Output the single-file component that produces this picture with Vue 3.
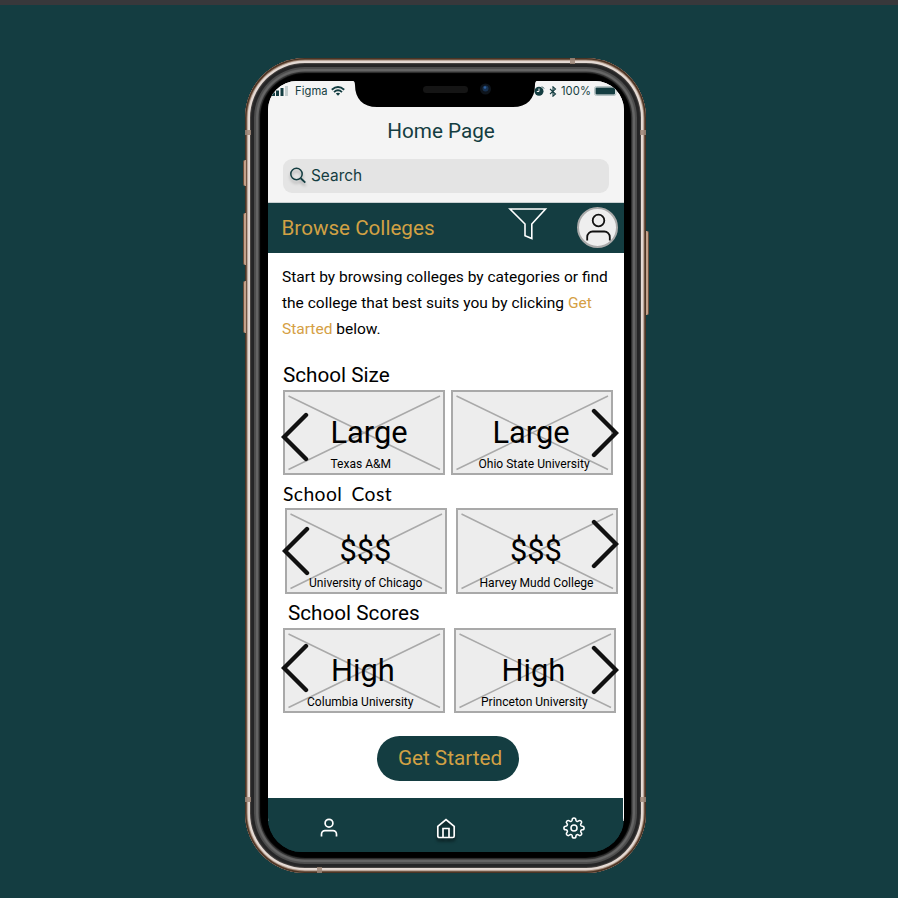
<script setup>
const groups = [
  {
    name: 'School Size', kind: 'size',
    cards: [
      { title: 'Large', school: 'Texas A&M', titleX: 45.5, schoolX: 45.5 },
      { title: 'Large', school: 'Ohio State University', titleX: 39.5, schoolX: 25.5 },
    ],
  },
  {
    name: 'School Cost', kind: 'cost',
    cards: [
      { title: '$$$', school: 'University of Chicago', titleX: 52.5, schoolX: 22 },
      { title: '$$$', school: 'Harvey Mudd College', titleX: 52, schoolX: 21.5 },
    ],
  },
  {
    name: 'School Scores', kind: 'scores',
    cards: [
      { title: 'High', school: 'Columbia University', titleX: 46, schoolX: 22 },
      { title: 'High', school: 'Princeton University', titleX: 45.5, schoolX: 25 },
    ],
  },
]
</script>

<template>
  <main class="stage">
    <div class="phone">
      <i class="button mute"></i>
      <i class="button up"></i>
      <i class="button down"></i>
      <i class="button power"></i>
      <i class="band-mark m1"></i><i class="band-mark m2"></i><i class="band-mark m3"></i>
      <i class="band-mark m4"></i><i class="band-mark m5"></i><i class="band-mark m6"></i>

      <div class="screen">
        <header class="top">
          <div class="status">
            <svg class="signal" width="16" height="10" viewBox="0 0 16 10">
              <path d="M0 6.500h3V10H0zM4 4.500h3V10H4zM8.500 2h3v8h-3z" fill="#143d41" />
              <path d="M13 0h3v10h-3z" fill="#c3cdce" />
            </svg>
            <span class="carrier">Figma</span>
            <svg class="wifi" width="14" height="10" viewBox="0 0 14 10" fill="none" stroke="#143d41" stroke-width="1.900">
              <path d="M.8 3.700Q7-1.700 13.200 3.700M3 6.100Q7 2.600 11 6.100" />
              <path d="M4.800 7.600Q7 5.900 9.200 7.600L7 9.800z" fill="#143d41" stroke="none" />
            </svg>
            <span class="spacer"></span>
            <svg class="alarm" width="11" height="10" viewBox="0 0 11 10">
              <circle cx="5" cy="5.200" r="4.500" fill="#143d41" />
              <path d="M5 2.500v3H2.800" fill="none" stroke="#f4f4f4" />
              <path d="M8 .5l2 2" stroke="#143d41" />
            </svg>
            <svg class="bluetooth" width="8" height="11" viewBox="0 0 8 11" fill="none" stroke="#143d41" stroke-width="1.100">
              <path d="M1 3l5.500 5L4 10.200V.8L6.500 3 1 8" />
            </svg>
            <span class="percent">100%</span>
            <svg class="battery" width="24" height="10" viewBox="0 0 24 10">
              <rect x=".5" y=".5" width="21.500" height="9" rx="2" fill="none" stroke="#b5c3c4" />
              <rect x="1.500" y="1.500" width="19.500" height="7" rx="1" fill="#143d41" />
            </svg>
          </div>
          <h1 class="title">Home Page</h1>
          <div class="search">
            <svg class="lens" width="17" height="17" viewBox="0 0 17 17" fill="none" stroke="#143d41" stroke-width="1.500">
              <circle cx="6.500" cy="7" r="5.700" />
              <path d="M10.700 11.200l4.600 4.400" stroke-width="1.900" />
            </svg>
            <span>Search</span>
          </div>
        </header>

        <section class="browse">
          <h2>Browse Colleges</h2>
          <svg class="funnel" width="40" height="34" viewBox="0 0 40 34" fill="none" stroke="#fff" stroke-width="1.600">
            <path d="M2 2h35.500L23.800 17v14.600l-6.800-2.800V17z" />
          </svg>
          <div class="avatar">
            <svg width="38" height="38" viewBox="0 0 38 38" fill="none" stroke="#111" stroke-width="1.800">
              <circle cx="19.500" cy="12.500" r="5.800" />
              <path d="M8.200 32.500v-3.500a5.500 5.500 0 0 1 5.500-5.500h11.600a5.500 5.500 0 0 1 5.500 5.500v3.500" />
            </svg>
          </div>
        </section>

        <p class="intro">
          Start by browsing colleges by categories or find<br />
          the college that best suits you by clicking <em>Get</em><br />
          <em>Started</em> below.
        </p>

        <section v-for="g in groups" :key="g.name" class="group" :class="g.kind">
          <h3>{{ g.name }}</h3>
          <div class="cards">
            <article v-for="c in g.cards" :key="c.school" class="card">
              <svg class="cross" viewBox="0 0 158 81" preserveAspectRatio="none" stroke="#a9a9a9" stroke-width="1.500">
                <path d="M3.500 4L155 77.500M155 4L3.500 77.500" />
              </svg>
              <strong :style="{ marginLeft: c.titleX + 'px' }">{{ c.title }}</strong>
              <small :style="{ marginLeft: c.schoolX + 'px' }">{{ c.school }}</small>
            </article>
            <svg class="arrow prev" width="28" height="50" viewBox="0 0 28 50">
              <path d="M25 3L3 25l22 22" />
            </svg>
            <svg class="arrow next" width="28" height="50" viewBox="0 0 28 50">
              <path d="M3 3l22 22L3 47" />
            </svg>
          </div>
        </section>

        <button class="start">Get Started</button>

        <nav class="tabs">
          <svg class="tab-user" width="18" height="20" viewBox="0 0 18 20">
            <circle cx="9" cy="5.200" r="3.900" />
            <path d="M1.500 18.500v-2.300a3.500 3.500 0 0 1 3.500-3.500h8a3.500 3.500 0 0 1 3.500 3.500v2.300" />
          </svg>
          <svg class="tab-home" width="20" height="21" viewBox="0 0 20 21">
            <path d="M1.800 8.300L10 1.500l8.200 6.800v9.700a1.500 1.500 0 0 1-1.500 1.500H3.300A1.500 1.500 0 0 1 1.800 18zM7 19.500v-9h6v9" />
          </svg>
          <svg class="tab-gear" width="22" height="22" viewBox="0 0 24 24">
            <circle cx="12" cy="12" r="3.300" />
            <path d="M19.400 15a1.650 1.650 0 0 0 .33 1.820l.06.06a2 2 0 1 1-2.830 2.830l-.06-.06a1.650 1.650 0 0 0-2.800 1.170V21a2 2 0 0 1-4 0v-.09A1.650 1.650 0 0 0 7.200 19.650l-.06.06a2 2 0 1 1-2.830-2.830l.06-.06A1.650 1.650 0 0 0 3.090 14H3a2 2 0 0 1 0-4h.09A1.650 1.650 0 0 0 4.350 7.200l-.06-.06a2 2 0 1 1 2.830-2.830l.06.06A1.650 1.650 0 0 0 10 3.090V3a2 2 0 0 1 4 0v.09a1.650 1.650 0 0 0 2.800 1.280l.06-.06a2 2 0 1 1 2.830 2.830l-.06.06A1.650 1.650 0 0 0 20.910 10H21a2 2 0 0 1 0 4h-.09a1.650 1.650 0 0 0-1.510 1z" />
          </svg>
        </nav>
      </div>

      <svg class="notch" width="190" height="28" viewBox="0 0 190 28">
        <path d="M0 0h190c-4 0-5 2-5 5 0 14-8 22-22 22H27C13 27 5 19 5 5c0-3-1-5-5-5z" />
        <rect x="73" y="6" width="45" height="7" rx="3.500" fill="#151515" />
        <circle cx="135.500" cy="9" r="5.500" fill="#0e141b" />
        <circle cx="135.500" cy="8.500" r="3" fill="#16304f" />
        <circle cx="135" cy="7.500" r="1.300" fill="#2f5f9c" />
      </svg>
    </div>
  </main>
</template>

<style>
body { background: #143d41; overflow: hidden; }
</style>

<style scoped>
* { box-sizing: border-box; }
h1, h2, h3, p { margin: 0; font-weight: 400; white-space: nowrap; }
svg { display: block; flex: none; }

.stage {
  height: 898px;
  padding: 53px 0 0 245px;
  border-top: 5px solid #38383b;
  background: #143d41;
  font-family: Roboto, sans-serif;
  color: #000;
}
.phone {
  position: relative;
  width: 401px;
  height: 815px;
  padding: 23px 22px 21px 23px;
  border-radius: 60px;
  background: #000;
  box-shadow:
    inset 0 0 0 1.500px #4b3424,
    inset 0 0 1px 2.500px #8f7360,
    inset 0 0 0 5px #e6dcd6,
    inset 0 0 1px 6px #4b4745,
    inset 0 0 0 9px #252526,
    inset 0 0 1px 11px #4c4c4c,
    inset 0 0 1px 13.500px #686868,
    inset 0 0 1px 15px #303030;
}
.screen {
  width: 356px;
  height: 771px;
  border-radius: 29px 29px 34px 34px;
  overflow: hidden;
  background: linear-gradient(#f4f4f4 0 100px, #fff 100px 740px, #143d41 740px);
  display: flex;
  flex-direction: column;
}
.button {
  position: absolute;
  left: -2px;
  width: 3px;
  border-radius: 2px 0 0 2px;
  background: #c2a18a;
  border-left: 1px solid #6b4e3b;
}
.mute { top: 102px; height: 26px; }
.up { top: 155px; height: 52px; }
.down { top: 223px; height: 52px; }
.power {
  left: auto;
  right: -3px;
  top: 173px;
  height: 84px;
  border: 0;
  border-right: 1px solid #6b4e3b;
  border-radius: 0 2px 2px 0;
}
.band-mark { position: absolute; width: 6px; height: 5px; background: #9d8779; opacity: .85; }
.m1 { left: 0; top: 72px; }
.m2 { right: 0; top: 72px; }
.m3 { left: 0; top: 739px; }
.m4 { right: 0; top: 739px; }
.m5 { left: 325px; top: 0; width: 5px; height: 6px; }
.m6 { left: 72px; bottom: 0; width: 5px; height: 6px; }
.notch { position: absolute; left: 105px; top: 22px; }

.top {
  height: 122px;
  flex: none;
  background: #f4f4f4;
  color: #143d41;
  display: flex;
  flex-direction: column;
  border-bottom: 1px solid #c9d0d1;
}
.status {
  height: 20px;
  padding: 0 6px 0 4px;
  display: flex;
  align-items: center;
  font: 11.200px Inter, sans-serif;
}
.carrier { margin-left: 7px; letter-spacing: .1px; }
.wifi { margin-left: 3.500px; }
.spacer { flex: 1; }
.bluetooth { margin-left: 4px; }
.percent { margin-left: 4px; letter-spacing: .1px; }
.battery { margin-left: 3px; }
.title { margin: 14px 0 0 -10px; font-size: 20.700px; line-height: 32px; text-align: center; }
.search {
  margin: 11.500px 15px 0 14.500px;
  height: 34px;
  padding-left: 7px;
  border-radius: 9px;
  background: #e4e4e4;
  display: flex;
  align-items: center;
  gap: 4.500px;
  font: 15.400px Inter, sans-serif;
}
.lens { filter: drop-shadow(0 3px 1.500px rgba(0, 0, 0, .25)); }

.browse {
  height: 50px;
  flex: none;
  padding: 0 6px 0 13.500px;
  background: #143d41;
  display: flex;
  align-items: center;
}
.browse h2 { width: 226px; font-size: 20.650px; color: #d1a144; }
.funnel { margin-bottom: 8px; }
.avatar {
  margin: 0 0 1px auto;
  width: 41px;
  height: 41px;
  border-radius: 50%;
  border: 2px solid #aaa;
  background: #eee;
}
.avatar svg { margin-top: -1px; }

.intro { margin: 10.500px 0 0 14px; font-size: 15.500px; line-height: 26px; }
.intro em { font-style: normal; color: #d5a044; }

.group { display: flex; flex-direction: column; flex: none; }
.group h3 { font-size: 20.700px; line-height: 28px; }
.size { margin: 19px 0 0 15px; }
.size h3 { margin-bottom: 1.400px; }
.cost { margin: 5px 0 0 17px; }
.cost h3 { margin-left: -2px; font-family: Lato, sans-serif; font-size: 19.300px; letter-spacing: .4px; word-spacing: 4px; }
.scores { margin: 5px 0 0 15px; }
.scores h3 { margin-left: 5px; margin-bottom: 1px; }
.cards { position: relative; display: flex; gap: 6px; }
.cost .cards { gap: 9px; }
.scores .cards { gap: 9px; }
.card {
  width: 162px;
  height: 85px;
  border: 2px solid #a9a9a9;
  background: #ededed;
  display: grid;
  grid-template-rows: 65px 16px;
  white-space: nowrap;
}
.cost .card { height: 86px; grid-template-rows: 66px 16px; }
.cross { grid-area: 1 / 1 / 3 / 2; width: 158px; height: 100%; }
.card strong { grid-area: 1 / 1; font-weight: 400; font-size: 30.800px; line-height: 36px; padding-top: 23px; }
.card small { grid-area: 2 / 1; font-size: 12.050px; line-height: 14px; }
.arrow { position: absolute; fill: none; stroke: #111; stroke-width: 4.400; stroke-linecap: round; }
.size .prev { left: -2px; top: 22px; }
.size .next { left: 307.500px; top: 18.500px; }
.cost .prev { left: -3px; top: 18px; }
.cost .next { left: 305.500px; top: 11px; }
.scores .prev { left: -2px; top: 15px; }
.scores .next { left: 308px; top: 17px; }

.start {
  margin: auto 0 17px 109px;
  width: 142px;
  height: 45.500px;
  flex: none;
  padding: 0 0 1px 4px;
  border: 0;
  border-radius: 23px;
  background: #143d41;
  color: #d1a144;
  font: 20.700px Roboto, sans-serif;
}
.tabs {
  height: 54px;
  flex: none;
  margin-right: 1px;
  padding: 0 38px 0 51.500px;
  display: flex;
  align-items: center;
  background: #143d41;
}
.tabs svg { fill: none; stroke: #fff; stroke-width: 1.700; margin-top: 5px; }
.tabs .tab-home { margin: 7px auto 0 98.500px; filter: drop-shadow(0 3px 1.500px rgba(0, 0, 0, .6)); }
</style>
